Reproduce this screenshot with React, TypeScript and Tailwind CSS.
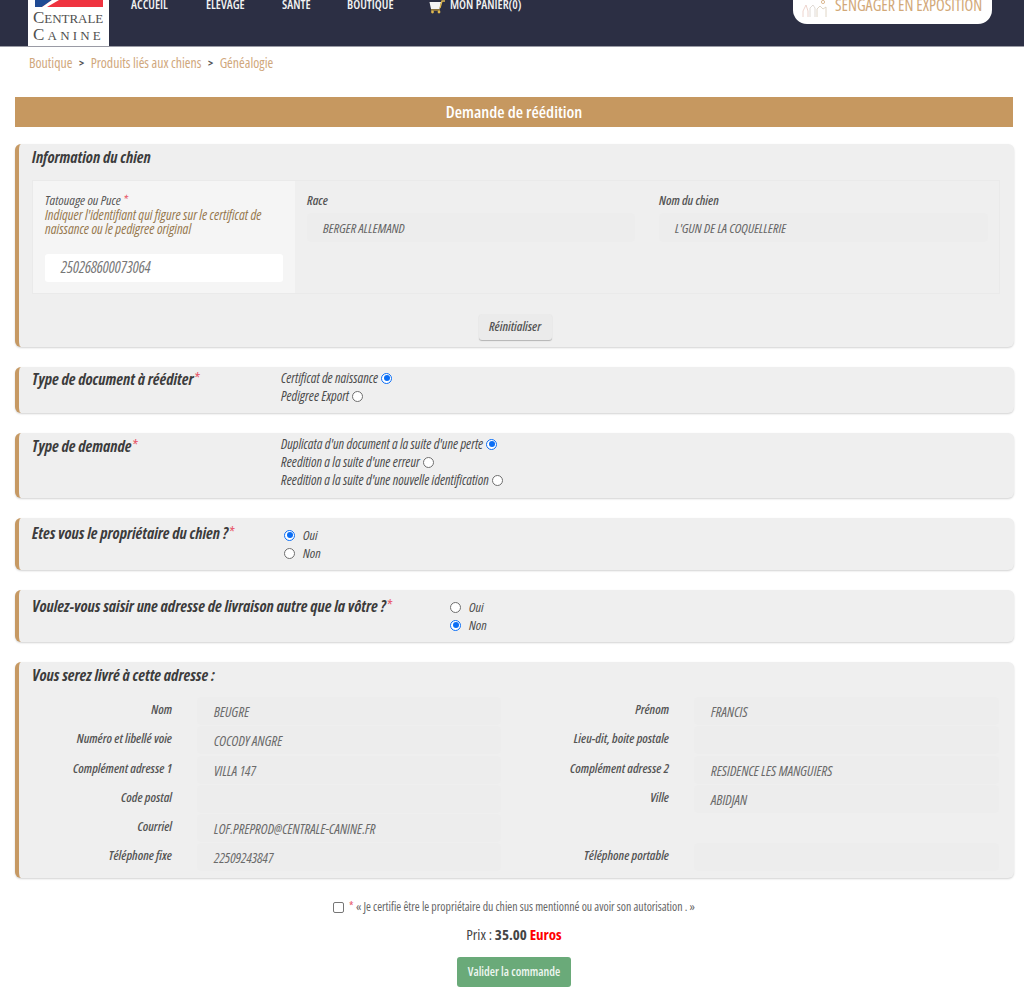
import React from "react";

function Star() {
  return <span className="font-normal text-[#e8596b]">*</span>;
}

function Section({ children, className }: { children: React.ReactNode; className: string }) {
  return (
    <section className={`ml-[15px] mr-[10px] rounded-[6px] border-l-[4px] border-[#c69963] bg-[#efefef] shadow-[0_1px_2px_rgba(0,0,0,0.18)] ${className}`}>
      {children}
    </section>
  );
}

function Radio({ on }: { on?: boolean }) {
  return (
    <span className={`inline-block h-[11px] w-[11px] shrink-0 rounded-full ${on ? "border-[1.5px] border-[#0b6ef5] bg-white p-[1.5px]" : "border border-[#6f6f6f] bg-white"}`}>
      {on && <span className="block h-full w-full rounded-full bg-[#0b6ef5]" />}
    </span>
  );
}

function Heading({ children }: { children: React.ReactNode }) {
  return <div className="whitespace-nowrap text-[16px] font-bold italic leading-[24px] text-[#3c3c3c]">{children}</div>;
}

function Opt({ label, on }: { label: string; on?: boolean }) {
  return (
    <div className="flex h-[18px] items-center gap-[3px] whitespace-nowrap text-[13.7px] italic text-[#4c4c4c]">
      {label} <Radio on={on} />
    </div>
  );
}

function YesNo({ first }: { first: boolean }) {
  return (
    <div>
      <div className="flex h-[18px] items-center gap-[8px] text-[13.5px] italic text-[#4c4c4c]"><Radio on={first} /> Oui</div>
      <div className="flex h-[18px] items-center gap-[8px] text-[13.5px] italic text-[#4c4c4c]"><Radio on={!first} /> Non</div>
    </div>
  );
}

function Field({ label, value }: { label: string; value?: string }) {
  return (
    <div className="flex h-[29.3px] items-stretch">
      <div className="w-[140px] shrink-0 whitespace-nowrap pt-[3px] text-right text-[13px] font-semibold italic text-[#555]">{label}</div>
      <div className="ml-[25px] flex h-[28px] flex-1 items-center rounded-[4px] bg-[#ededed] pl-[17px] pt-[1px] text-[14px] italic text-[#6a6a6a]">{value}</div>
    </div>
  );
}

export default function App() {
  return (
    <div className="h-[996px] overflow-hidden bg-white font-['Open_Sans',sans-serif] [font-stretch:75%]">
      <header className="relative flex h-[47px] items-start border-b border-[#9a9ba5] bg-[#2c2f44] text-[12.3px] text-[#f2f2f2]">
        <div className="ml-[28px] flex h-[46px] w-[81px] flex-col items-center bg-white">
          <svg viewBox="0 0 68 7" className="h-[7px] w-[68px]" aria-hidden="true">
            <rect width="68" height="7" fill="#ef3340" />
            <polygon points="0,0 17,0 7,7 0,7" fill="#1f4a94" />
            <polygon points="17,0 24,0 12,7 7,7" fill="#ffffff" />
          </svg>
          <div className="mt-[2px] font-['Liberation_Serif',serif] text-[13px] leading-[15px] text-[#4f4f4f] [font-stretch:normal]">
            <span className="block tracking-[-0.05px]"><span className="text-[17px] leading-none">C</span>ENTRALE</span>
            <span className="block tracking-[3.2px]"><span className="text-[17px] leading-none">C</span>ANINE</span>
          </div>
        </div>
        <nav className="-mt-[4px] ml-[22px] flex items-start font-semibold">
          <span className="w-[75px]">ACCUEIL</span>
          <span className="w-[76px]">ELEVAGE</span>
          <span className="w-[65px]">SANTE</span>
          <span className="w-[82px]">BOUTIQUE</span>
          <span className="flex items-center gap-[5px]">
            <svg viewBox="0 0 16 15" className="mt-[2px] h-[15px] w-[16px]" aria-hidden="true">
              <path d="M0.5 3h11.5l-1.5 7H2z" fill="#f4f4f4" />
              <path d="M11 9l2-7h3" fill="none" stroke="#e0b94f" strokeWidth="1.3" />
              <path d="M2 11h9" stroke="#c9a13c" strokeWidth="1.2" />
              <circle cx="3.5" cy="13" r="1.4" fill="#e0b94f" />
              <circle cx="10" cy="13" r="1.4" fill="#e0b94f" />
            </svg>
            MON PANIER(0)
          </span>
        </nav>
        <div className="absolute left-[793px] top-0 flex h-[24px] w-[199px] items-start gap-[8px] rounded-b-[14px] bg-white pl-[9px] text-[16px] text-[#d2a878]">
          <svg viewBox="0 0 25 18" className="h-[18px] w-[25px] shrink-0" fill="none" strokeWidth="0.8" aria-hidden="true">
            <path d="M1 17v-6l3-6 2 6v6" stroke="#e9c9c0" />
            <path d="M8 17v-9l3-3 2 3v9" stroke="#d8d2cc" />
            <path d="M15 17v-8l3-3 3 3 3-2v10" stroke="#d8cbb8" />
            <circle cx="21" cy="2" r="1.6" stroke="#d2a878" />
          </svg>
          <span className="-mt-[7px] whitespace-nowrap">SENGAGER EN EXPOSITION</span>
        </div>
      </header>

      <div className="ml-[29px] mt-[8px] flex h-[17px] items-center gap-[6.5px] text-[13.8px] text-[#d0a77c]">
        <span>Boutique</span><span className="text-[11px] font-bold text-[#555]">&gt;</span>
        <span>Produits liés aux chiens</span><span className="text-[11px] font-bold text-[#555]">&gt;</span>
        <span>Généalogie</span>
      </div>

      <h1 className="ml-[15px] mr-[11px] mt-[25px] flex h-[30px] items-center justify-center bg-[#c69860] text-[16.8px] font-semibold text-white">
        Demande de réédition
      </h1>

      <Section className="mt-[17px] h-[203px] pl-[13px] pr-[14px] pt-[1px]">
        <Heading>Information du chien</Heading>
        <div className="mt-[11px] flex h-[114px] border border-[#eaeaea]">
          <div className="w-[262px] bg-[#f5f5f5] px-[12px] pt-[12px]">
            <div className="text-[13.5px] italic leading-[15px] text-[#555]">Tatouage ou Puce <Star /></div>
            <div className="text-[14px] italic leading-[14px] text-[#97794f]">
              Indiquer l'identifiant qui figure sur le certificat de naissance ou le pedigree original
            </div>
            <div className="mt-[18px] flex h-[28px] items-center rounded-[3px] bg-white pl-[16px] text-[15.5px] italic text-[#777]">250268600073064</div>
          </div>
          <div className="ml-[12px] w-[340px] pt-[12px]">
            <div className="text-[13px] font-semibold italic leading-[14px] text-[#555]">Race</div>
            <div className="mt-[6px] flex h-[29px] w-[328px] items-center rounded-[4px] bg-[#ededed] pl-[16px] pt-[2px] text-[13.5px] italic text-[#666]">BERGER ALLEMAND</div>
          </div>
          <div className="ml-[12px] flex-1 pt-[12px]">
            <div className="text-[13px] font-semibold italic leading-[14px] text-[#555]">Nom du chien</div>
            <div className="mt-[6px] flex h-[29px] w-[329px] items-center rounded-[4px] bg-[#ededed] pl-[16px] pt-[2px] text-[13.5px] italic text-[#666]">L'GUN DE LA COQUELLERIE</div>
          </div>
        </div>
        <div className="mt-[20px] flex justify-center">
          <button className="mr-[2px] h-[26px] w-[73px] rounded-[3px] bg-[#ebebeb] text-[13px] font-semibold italic text-[#555] shadow-[0_1px_1px_rgba(0,0,0,0.25)]">Réinitialiser</button>
        </div>
      </Section>

      <Section className="mt-[20px] flex h-[46px] pl-[13px]">
        <div className="w-[249px]"><Heading>Type de document à rééditer<Star /></Heading></div>
        <div className="pt-[2px]"><Opt label="Certificat de naissance" on /><Opt label="Pedigree Export" /></div>
      </Section>

      <Section className="mt-[20px] flex h-[65px] pl-[13px] pt-[1px]">
        <div className="w-[249px]"><Heading>Type de demande<Star /></Heading></div>
        <div className="pt-[1px]">
          <Opt label="Duplicata d'un document a la suite d'une perte" on />
          <Opt label="Reedition a la suite d'une erreur" />
          <Opt label="Reedition a la suite d'une nouvelle identification" />
        </div>
      </Section>

      <Section className="mt-[20px] flex h-[52px] pl-[13px] pt-[3px]">
        <div className="w-[252px]"><Heading>Etes vous le propriétaire du chien ?<Star /></Heading></div>
        <div className="pt-[5px]"><YesNo first /></div>
      </Section>

      <Section className="mt-[20px] flex h-[52px] pl-[13px] pt-[4px]">
        <div className="w-[418px]"><Heading>Voulez-vous saisir une adresse de livraison autre que la vôtre ?<Star /></Heading></div>
        <div className="pt-[4px]"><YesNo first={false} /></div>
      </Section>

      <Section className="mt-[20px] h-[216px] pl-[13px] pr-[15px] pt-[1px]">
        <Heading>Vous serez livré à cette adresse :</Heading>
        <div className="mt-[10px] grid grid-cols-[469px_470px] gap-x-[28px]">
          <div>
            <Field label="Nom" value="BEUGRE" />
            <Field label="Numéro et libellé voie" value="COCODY ANGRE" />
            <Field label="Complément adresse 1" value="VILLA 147" />
            <Field label="Code postal" />
            <Field label="Courriel" value="LOF.PREPROD@CENTRALE-CANINE.FR" />
            <Field label="Téléphone fixe" value="22509243847" />
          </div>
          <div>
            <Field label="Prénom" value="FRANCIS" />
            <Field label="Lieu-dit, boite postale" />
            <Field label="Complément adresse 2" value="RESIDENCE LES MANGUIERS" />
            <Field label="Ville" value="ABIDJAN" />
            <div className="h-[29.3px]" />
            <Field label="Téléphone portable" />
          </div>
        </div>
      </Section>

      <div className="ml-[15px] mr-[11px]">
        <div className="mt-[21px] flex h-[16px] items-center justify-center gap-[5px] text-[11.8px] text-[#666]">
          <span className="h-[11px] w-[11px] rounded-[2px] border border-[#767676] bg-white" />
          <span><Star /> « Je certifie être le propriétaire du chien sus mentionné ou avoir son autorisation . »</span>
        </div>
        <div className="mt-[11px] text-center text-[15px] leading-[16px] text-[#444]">
          Prix : <b>35.00</b> <b className="text-[#f00]">Euros</b>
        </div>
        <div className="mt-[15px] flex justify-center">
          <button className="h-[30px] w-[114px] rounded-[3px] bg-[#6aaa79] text-[12px] font-semibold text-[#eef6f0]">Valider la commande</button>
        </div>
      </div>
    </div>
  );
}
